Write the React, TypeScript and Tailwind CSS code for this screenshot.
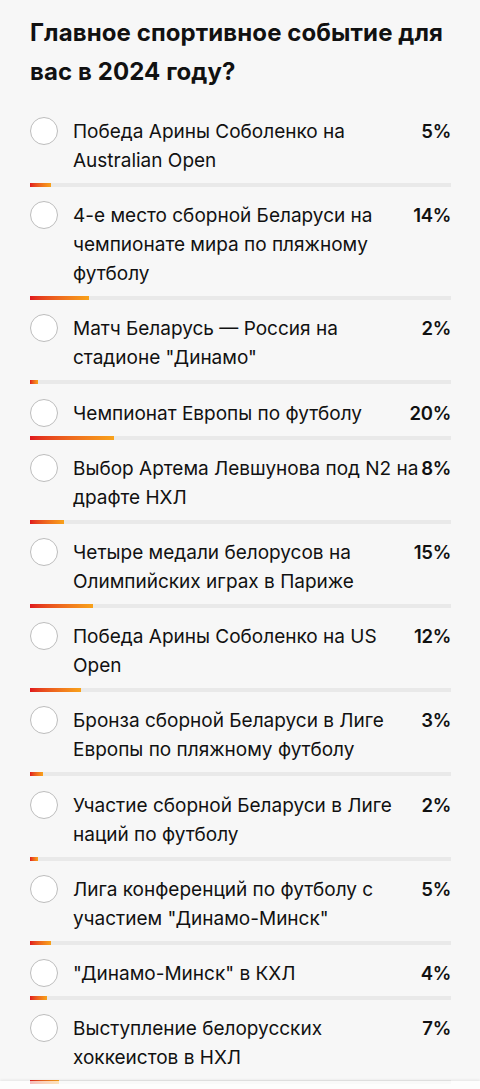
const options = [
  { text: "Победа Арины Соболенко на Australian Open", pct: 5 },
  { text: "4-е место сборной Беларуси на чемпионате мира по пляжному футболу", pct: 14 },
  { text: 'Матч Беларусь — Россия на стадионе "Динамо"', pct: 2 },
  { text: "Чемпионат Европы по футболу", pct: 20 },
  { text: "Выбор Артема Левшунова под N2 на драфте НХЛ", pct: 8 },
  { text: "Четыре медали белорусов на Олимпийских играх в Париже", pct: 15 },
  { text: "Победа Арины Соболенко на US Open", pct: 12 },
  { text: "Бронза сборной Беларуси в Лиге Европы по пляжному футболу", pct: 3 },
  { text: "Участие сборной Беларуси в Лиге наций по футболу", pct: 2 },
  { text: 'Лига конференций по футболу с участием "Динамо-Минск"', pct: 5 },
  { text: '"Динамо-Минск" в КХЛ', pct: 4 },
  { text: "Выступление белорусских хоккеистов в НХЛ", pct: 7 },
];

export default function App() {
  return (
    <div className="relative h-[1089px] overflow-hidden bg-white font-['Inter',sans-serif] text-[#111]">
      <div className="bg-[#f7f7f7] pl-[30px] pr-[29px] pt-[13px] pb-6">
        <h1 className="text-[24px] font-bold leading-[39px] tracking-[0.1px] mb-[26px]">
          Главное спортивное событие для вас в 2024 году?
        </h1>
        <div>
          {options.map(o => (
            <div key={o.text}>
              <div className="flex items-start">
                <span className="w-[28px] h-[28px] rounded-full border-[1.5px] border-[#bdbdbd] bg-white shrink-0" />
                <span className="flex-1 ml-[15px] text-[19px] leading-[29px]">{o.text}</span>
                <span className="text-[18.5px] leading-[29px] font-semibold tracking-[-0.3px]">{o.pct}%</span>
              </div>
              <div className="h-1 bg-[#e9e9e9] mt-[8px] mb-[14.2px]">
                <div className="h-full bg-gradient-to-r from-[#e0161e] to-[#f8a21a]" style={{ width: `${o.pct}%` }} />
              </div>
            </div>
          ))}
        </div>
      </div>
      <div className="absolute left-0 right-0 bottom-0 h-[8px] bg-white/70 shadow-[0_-1px_3px_rgba(0,0,0,0.08)]" />
    </div>
  );
}
